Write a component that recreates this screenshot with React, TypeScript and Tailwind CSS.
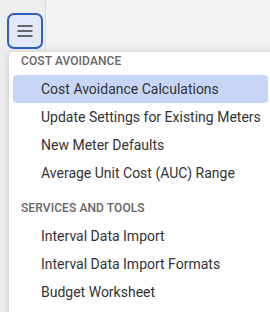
import React from "react";

const groups = [
  {
    title: "COST AVOIDANCE",
    items: [
      "Cost Avoidance Calculations",
      "Update Settings for Existing Meters",
      "New Meter Defaults",
      "Average Unit Cost (AUC) Range",
    ],
  },
  {
    title: "SERVICES AND TOOLS",
    items: ["Interval Data Import", "Interval Data Import Formats", "Budget Worksheet"],
  },
];

export default function App() {
  return (
    <div
      className="relative w-[270px] h-[312px] overflow-hidden bg-[#f1f2f4] flex"
      style={{ fontFamily: "Roboto, 'Noto Sans', sans-serif" }}
    >
      <div className="w-[46px] h-full bg-[#eeeeef] border-r border-[#dcdcdc] pt-[13px] pl-[7px]">
        <button className="w-[36px] h-[36px] rounded-[7px] border-2 border-[#2f5fc0] bg-[#e2e9f9] flex items-center justify-center">
          <svg width="16" height="14" viewBox="0 0 16 14">
            <rect x="0.5" y="1" width="15" height="2" fill="#666666" />
            <rect x="0.5" y="6" width="15" height="2" fill="#666666" />
            <rect x="0.5" y="11" width="15" height="2" fill="#666666" />
          </svg>
        </button>
      </div>
      <div className="absolute left-[9px] top-[52px] w-[280px] h-[300px] bg-white rounded-[5px] shadow-[0_1px_8px_rgba(0,0,0,0.18)]">
        {groups.map((g, gi) => (
          <div key={g.title} className={gi > 0 ? "mt-[12px]" : ""}>
            <div className="h-[23px] pt-[2px] pl-[12px] text-[12px] leading-[14px] font-medium text-[#666666] tracking-[0.1px]">
              {g.title}
            </div>
            {g.items.map((it, ii) => (
              <div
                key={it}
                className={
                  "ml-[4px] w-[255px] h-[28px] pl-[28px] flex items-center rounded-[4px] text-[14px] text-[#333333] whitespace-nowrap " +
                  (gi === 0 && ii === 0 ? "bg-[#c7d6f6]" : "")
                }
              >
                {it}
              </div>
            ))}
          </div>
        ))}
      </div>
    </div>
  );
}
